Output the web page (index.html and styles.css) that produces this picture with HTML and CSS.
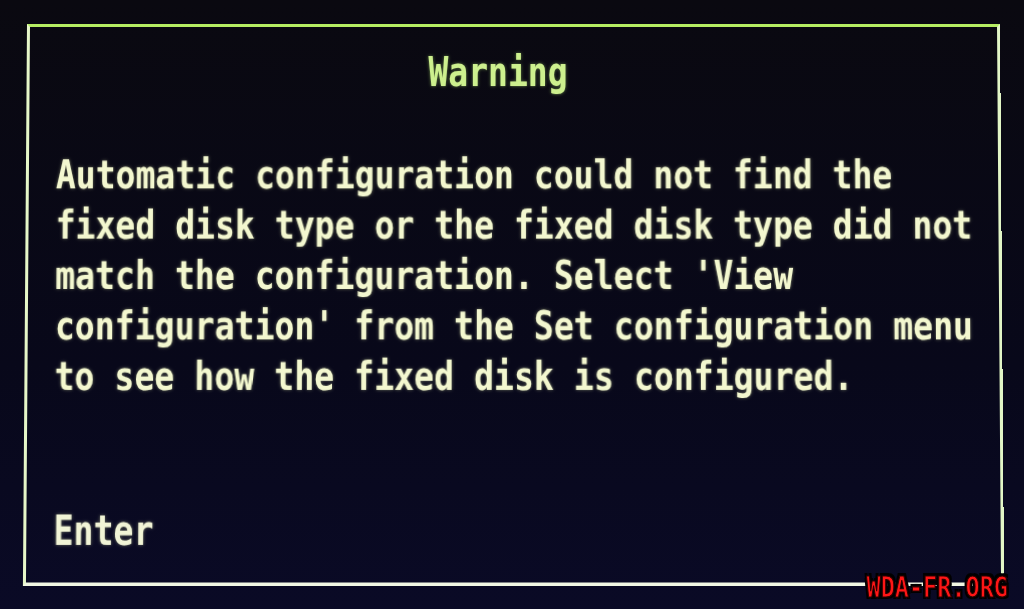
FILE: index.html
```html
<!DOCTYPE html>
<html lang="en">
<head>
    <meta charset="UTF-8">
    <meta name="viewport" content="width=device-width, initial-scale=1.0">
    <title>Warning</title>
    <link rel="stylesheet" href="styles.css">
</head>
<body>
    <div class="screen">
        <div class="dialog">
            <h1 class="title">Warning</h1>
            <p class="message">
                <span class="line">Automatic configuration could not find the</span>
                <span class="line">fixed disk type or the fixed disk type did not</span>
                <span class="line">match the configuration. Select 'View</span>
                <span class="line">configuration' from the Set configuration menu</span>
                <span class="line">to see how the fixed disk is configured.</span>
            </p>
            <div class="enter">Enter</div>
        </div>
        <div class="watermark">WDA-FR.ORG</div>
    </div>
</body>
</html>
```

FILE: styles.css
```css
body {
    margin: 0;
    padding: 0;
    background: #09080f;
    font-family: "DejaVu Sans Mono", "Liberation Mono", monospace;
}

.screen {
    position: relative;
    width: 1024px;
    height: 609px;
    overflow: hidden;
    background: linear-gradient(180deg, #0a0910 0%, #08081a 60%, #0a0a26 100%);
}

.dialog {
    position: relative;
    top: 24px;
    margin-left: 27px;
    width: 940px;
    height: 551px;
    padding: 0 0 0 27px;
    border: 3px solid #e6f7c8;
    border-top-color: #b6ee62;
    border-right-color: #e2f6c6;
    border-bottom-color: #f2f8e4;
    display: flex;
    flex-direction: column;
    transform: perspective(1400px) rotateX(1.2deg);
    transform-origin: 50% 0;
}

.title,
.message,
.enter {
    margin: 0;
    font-size: 33px;
    font-weight: bold;
    line-height: 50px;
}

.title {
    margin-top: 21px;
    margin-left: -58px;
    text-align: center;
    color: #cdf08e;
    transform: scaleY(1.22);
    text-shadow: 0 0 3px rgba(180, 240, 110, 0.5);
}

.message {
    margin-top: 52px;
    color: #f3f7cf;
}

.line {
    display: block;
    white-space: pre;
    transform: scaleY(1.17);
    text-shadow: 0 0 3px rgba(230, 240, 170, 0.45);
}

.enter {
    margin-top: 102px;
    color: #f1f4d6;
    transform: scaleY(1.25);
    text-shadow: 0 0 3px rgba(230, 240, 170, 0.45);
}

.watermark {
    position: absolute;
    right: 16px;
    bottom: 10px;
    font-family: "DejaVu Sans Mono", monospace;
    font-size: 23.5px;
    font-weight: bold;
    line-height: 24px;
    color: #ff1616;
    -webkit-text-stroke: 1px #300000;
    text-shadow: 2px 2px 0 #000, -2px -2px 0 #000, 2px -2px 0 #000, -2px 2px 0 #000;
    transform: scaleY(1.2);
}
```
